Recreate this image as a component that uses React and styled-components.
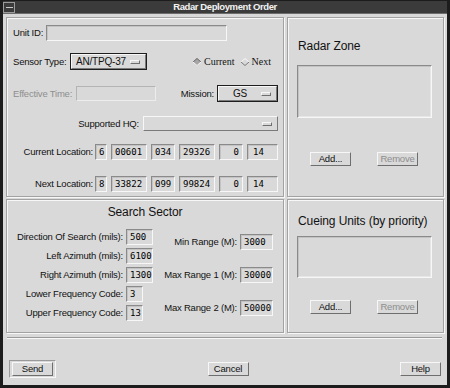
import React from "react";
import styled, { createGlobalStyle } from "styled-components";

const BG = "#d9d9d9";
const SANS = `"Liberation Sans", Arial, Helvetica, sans-serif`;
const MONO = `"DejaVu Sans Mono", "Liberation Mono", monospace`;
const SERIF = `"Liberation Serif", "Times New Roman", serif`;
const DARK = "#8a8a8a";
const LIGHT = "#f7f7f7";

const GlobalStyle = createGlobalStyle`
  html, body { margin: 0; padding: 0; background: ${BG}; }
  body { font-family: ${SANS}; }
  *, *::before, *::after { box-sizing: border-box; }
`;

const Window = styled.div`
  width: 450px;
  height: 388px;
  background: ${BG};
  border: 3px solid #1c1c1c;
  border-top: 1px solid #1c1c1c;
  display: flex;
  flex-direction: column;
  font-family: ${SANS};
  color: #111;
  overflow: hidden;
`;

const TitleBar = styled.div`
  flex: none;
  height: 13px;
  background: #3b3b3b;
  border-bottom: 1px solid #6c6c6c;
  display: grid;
  grid-template-columns: 13px 1fr 13px;
  align-items: center;
`;

const MenuBox = styled.div`
  width: 12px;
  height: 11px;
  border: 1px solid #9a9a9a;
  display: flex;
  align-items: center;
  justify-content: center;
  &::after {
    content: "";
    width: 7px;
    height: 1px;
    background: #c8c8c8;
  }
`;

const TitleText = styled.div`
  text-align: center;
  color: #f2f2f2;
  font-weight: bold;
  font-size: 9.5px;
  letter-spacing: -0.4px;
  line-height: 12px;
`;

const Body = styled.div`
  flex: none;
  display: grid;
  grid-template-columns: 278px 157px;
  grid-template-rows: 180px 134px;
  column-gap: 3px;
  row-gap: 2px;
  padding: 3px 3px 0 3px;
`;

const Frame = styled.div`
  border: 1px solid #a2a2a2;
  box-shadow: inset 1px 1px 0 ${LIGHT}, 1px 1px 0 ${LIGHT};
  display: flex;
  flex-direction: column;
`;

const Row = styled.div`
  display: flex;
  align-items: center;
  height: ${(p) => p.$h}px;
  margin-top: ${(p) => p.$mt}px;
  padding-left: ${(p) => p.$pl ?? 6}px;
`;

const Label = styled.span`
  flex: none;
  width: ${(p) => (p.$w ? `${p.$w}px` : "auto")};
  text-align: ${(p) => (p.$right ? "right" : "left")};
  padding-right: ${(p) => p.$pr ?? 0}px;
  font-size: 9.5px;
  letter-spacing: -0.2px;
  line-height: 12px;
  color: ${(p) => (p.$disabled ? "#8e8e8e" : "#111")};
  white-space: nowrap;
`;

const Field = styled.div`
  flex: none;
  width: ${(p) => p.$w}px;
  height: ${(p) => p.$h ?? 16}px;
  margin-left: ${(p) => p.$ml ?? 0}px;
  border: 1px solid;
  border-color: ${(p) =>
    p.$disabled
      ? `#b4b4b4 #ececec #ececec #b4b4b4`
      : `${DARK} ${LIGHT} ${LIGHT} ${DARK}`};
  box-shadow: ${(p) => (p.$disabled ? "none" : "inset 1px 1px 0 #c3c3c3")};
  background: ${BG};
  font-family: ${MONO};
  font-size: 9px;
  color: #000;
  display: flex;
  align-items: center;
  justify-content: ${(p) => (p.$align === "right" ? "flex-end" : p.$align === "center" ? "center" : "flex-start")};
  padding: 0 ${(p) => p.$pad ?? 3}px;
`;

const OptionButton = styled.div`
  flex: none;
  width: ${(p) => p.$w}px;
  height: ${(p) => p.$h ?? 17}px;
  border: 1px solid ${(p) => (p.$focus ? "#1e1e1e" : "transparent")};
  display: flex;
`;

const OptionFace = styled.div`
  flex: 1;
  display: flex;
  align-items: center;
  border: 1px solid;
  border-color: ${LIGHT} #7a7a7a #7a7a7a ${LIGHT};
  margin: ${(p) => (p.$flat ? "-1px" : "0")};
  padding-right: 5px;
`;

const OptionText = styled.span`
  flex: 1;
  text-align: center;
  font-size: 10px;
  letter-spacing: -0.2px;
  line-height: 12px;
  color: #111;
  white-space: nowrap;
`;

const Indicator = styled.span`
  flex: none;
  width: 10px;
  height: 4px;
  border: 1px solid;
  border-color: ${LIGHT} #6e6e6e #6e6e6e ${LIGHT};
`;

const RadioGroup = styled.div`
  display: flex;
  align-items: center;
  margin-left: 46px;
  font-family: ${SERIF};
  font-size: 10px;
  color: #111;
`;

const RadioItem = styled.span`
  display: flex;
  align-items: center;
  gap: 3px;
  margin-right: 6px;
  line-height: 12px;
`;

const Diamond = ({ on }) => (
  <svg width="8" height="8" viewBox="0 0 8 8" style={{ flex: "none" }}>
    <polygon points="4,0 8,4 4,8 0,4" fill={on ? "#a6a6a6" : "none"} />
    <polyline points="0,4 4,0.5 8,4" fill="none" stroke={on ? "#6a6a6a" : "#f8f8f8"} strokeWidth="1" />
    <polyline points="0,4 4,7.5 8,4" fill="none" stroke={on ? "#f8f8f8" : "#7a7a7a"} strokeWidth="1" />
  </svg>
);

const FrameTitle = styled.div`
  margin-top: ${(p) => p.$mt}px;
  padding-left: ${(p) => p.$pl ?? 0}px;
  text-align: ${(p) => (p.$center ? "center" : "left")};
  font-size: 12px;
  letter-spacing: -0.1px;
  line-height: 14px;
  color: #111;
  white-space: nowrap;
`;

const ListBox = styled.div`
  width: 135px;
  height: ${(p) => p.$h}px;
  margin-top: ${(p) => p.$mt}px;
  margin-left: 9px;
  border: 1px solid;
  border-color: ${DARK} ${LIGHT} ${LIGHT} ${DARK};
  box-shadow: inset 1px 1px 0 #c3c3c3, inset -1px -1px 0 #e6e6e6;
`;

const ButtonRow = styled.div`
  display: flex;
  gap: 26px;
  margin-top: ${(p) => p.$mt}px;
  padding-left: 22px;
`;

const PushButton = styled.button`
  flex: none;
  width: 41px;
  height: 14px;
  padding: 0;
  margin: 0;
  background: ${BG};
  border: 1px solid;
  border-color: ${LIGHT} #6e6e6e #6e6e6e ${LIGHT};
  font-family: ${SANS};
  font-size: 9.5px;
  letter-spacing: -0.2px;
  line-height: 12px;
  color: ${(p) => (p.disabled ? "#8e8e8e" : "#111")};
  cursor: default;
`;

const DefaultRing = styled.div`
  padding: 1px 2px;
  border: 1px solid;
  border-color: #9a9a9a ${LIGHT} ${LIGHT} #9a9a9a;
  display: flex;
`;

const SectorBody = styled.div`
  display: flex;
  align-items: flex-start;
  margin-top: 10px;
`;

const FormGrid = styled.div`
  display: grid;
  grid-template-columns: ${(p) => p.$lw}px auto;
  grid-auto-rows: 16px;
  column-gap: 3px;
  row-gap: ${(p) => p.$gap}px;
  align-items: center;
  margin-top: ${(p) => p.$mt ?? 0}px;
  margin-left: ${(p) => p.$ml ?? 0}px;
`;

const Separator = styled.div`
  flex: none;
  height: 2px;
  margin: 4px 5px 0 4px;
  border-top: 1px solid #9a9a9a;
  border-bottom: 1px solid ${LIGHT};
`;

const ButtonBar = styled.div`
  flex: none;
  display: flex;
  align-items: center;
  justify-content: space-between;
  margin-top: 21px;
  padding: 0 6px;
`;

const currentLoc = ["6", "00601", "034", "29326", "0", "14"];
const nextLoc = ["8", "33822", "099", "99824", "0", "14"];
const locWidths = [12, 36, 24, 36, 24, 31];

const LocationRow = ({ label, values, mt }) => (
  <Row $mt={mt} $h={16}>
    <Label $w={82} $right $pr={2}>{label}</Label>
    {values.map((v, i) => (
      <Field
        key={i}
        $w={locWidths[i]}
        $ml={i === 0 ? 0 : 4}
        $align={i === 4 ? "right" : "left"}
        $pad={i === 5 ? 5 : 3}
      >
        {v}
      </Field>
    ))}
  </Row>
);

export default function App() {
  return (
    <>
      <GlobalStyle />
      <Window>
        <TitleBar>
          <MenuBox />
          <TitleText>Radar Deployment Order</TitleText>
          <span />
        </TitleBar>
        <Body>
          <Frame>
            <Row $mt={7} $h={16}>
              <Label $w={33}>Unit ID:</Label>
              <Field $w={181} />
            </Row>
            <Row $mt={12} $h={17}>
              <Label $w={57}>Sensor Type:</Label>
              <OptionButton $w={77} $focus>
                <OptionFace>
                  <OptionText>AN/TPQ-37</OptionText>
                  <Indicator />
                </OptionFace>
              </OptionButton>
              <RadioGroup>
                <RadioItem>
                  <Diamond on />
                  Current
                </RadioItem>
                <RadioItem>
                  <Diamond />
                  Next
                </RadioItem>
              </RadioGroup>
            </Row>
            <Row $mt={15} $h={17}>
              <Label $w={63} $disabled>Effective Time:</Label>
              <Field $w={80} $h={15} $disabled />
              <Label $w={61} $right $pr={3}>Mission:</Label>
              <OptionButton $w={61} $focus>
                <OptionFace>
                  <OptionText>GS</OptionText>
                  <Indicator />
                </OptionFace>
              </OptionButton>
            </Row>
            <Row $mt={14} $h={15}>
              <Label $w={130} $right $pr={4}>Supported HQ:</Label>
              <OptionButton $w={135} $h={15}>
                <OptionFace $flat>
                  <OptionText />
                  <Indicator />
                </OptionFace>
              </OptionButton>
            </Row>
            <LocationRow label="Current Location:" values={currentLoc} mt={13} />
            <LocationRow label="Next Location:" values={nextLoc} mt={16} />
          </Frame>

          <Frame>
            <FrameTitle $mt={21} $pl={10}>Radar Zone</FrameTitle>
            <ListBox $mt={12} $h={53} />
            <ButtonRow $mt={34}>
              <PushButton>Add...</PushButton>
              <PushButton disabled>Remove</PushButton>
            </ButtonRow>
          </Frame>

          <Frame>
            <FrameTitle $mt={5} $center>Search Sector</FrameTitle>
            <SectorBody>
              <FormGrid $lw={116} $gap={3}>
                <Label $right>Direction Of Search (mils):</Label>
                <Field $w={27}>500</Field>
                <Label $right>Left Azimuth (mils):</Label>
                <Field $w={27}>6100</Field>
                <Label $right>Right Azimuth (mils):</Label>
                <Field $w={27}>1300</Field>
                <Label $right>Lower Frequency Code:</Label>
                <Field $w={17}>3</Field>
                <Label $right>Upper Frequency Code:</Label>
                <Field $w={17}>13</Field>
              </FormGrid>
              <FormGrid $lw={80} $gap={17} $mt={5} $ml={4}>
                <Label $right>Min Range (M):</Label>
                <Field $w={33}>3000</Field>
                <Label $right>Max Range 1 (M):</Label>
                <Field $w={33}>30000</Field>
                <Label $right>Max Range 2 (M):</Label>
                <Field $w={33}>50000</Field>
              </FormGrid>
            </SectorBody>
          </Frame>

          <Frame>
            <FrameTitle $mt={14} $pl={10}>Cueing Units (by priority)</FrameTitle>
            <ListBox $mt={8} $h={42} />
            <ButtonRow $mt={22}>
              <PushButton>Add...</PushButton>
              <PushButton disabled>Remove</PushButton>
            </ButtonRow>
          </Frame>
        </Body>
        <Separator />
        <ButtonBar>
          <DefaultRing>
            <PushButton>Send</PushButton>
          </DefaultRing>
          <PushButton>Cancel</PushButton>
          <PushButton>Help</PushButton>
        </ButtonBar>
      </Window>
    </>
  );
}
